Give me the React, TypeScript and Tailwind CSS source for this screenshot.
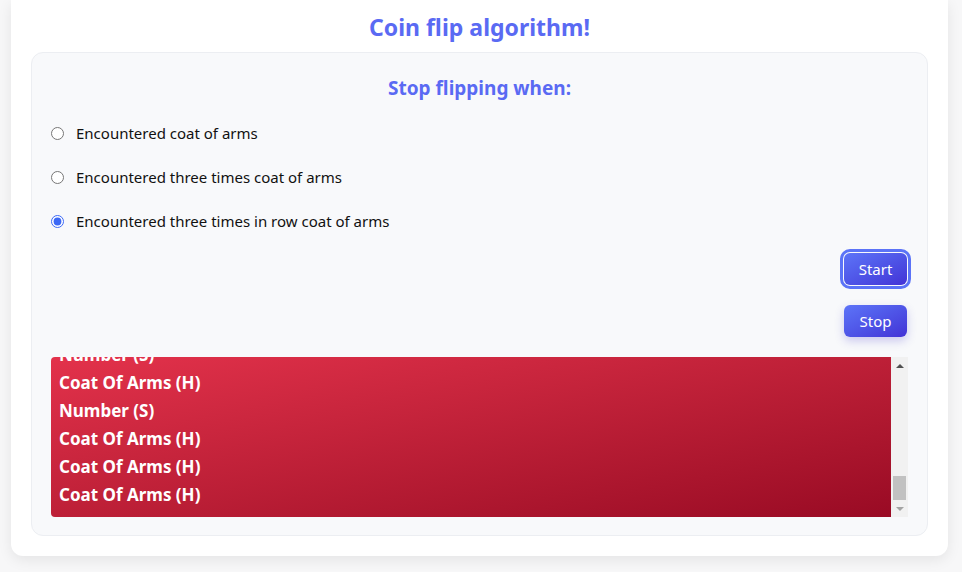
import { useEffect, useRef, useState } from "react";

const modes = [
  "Encountered coat of arms",
  "Encountered three times coat of arms",
  "Encountered three times in row coat of arms",
];

const flips = [
  "Number (S)",
  "Coat Of Arms (H)",
  "Number (S)",
  "Number (S)",
  "Coat Of Arms (H)",
  "Number (S)",
  "Coat Of Arms (H)",
  "Number (S)",
  "Coat Of Arms (H)",
  "Coat Of Arms (H)",
  "Coat Of Arms (H)",
];

export default function App() {
  const [mode, setMode] = useState(2);
  const listRef = useRef<HTMLDivElement>(null);

  useEffect(() => {
    const el = listRef.current;
    if (el) el.scrollTop = el.scrollHeight;
  }, []);

  return (
    <div
      className="min-h-[572px] bg-[#f7f7f8]"
      style={{ fontFamily: '"Noto Sans", "Segoe UI", sans-serif' }}
    >
      <div className="ml-[11px] w-[937px] rounded-b-[12px] bg-white px-[20px] pt-[10px] pb-[20px] shadow-[0_4px_14px_rgba(0,0,0,0.08)]">
        <h1 className="text-center text-[23px] font-bold leading-[34px] text-[#5a6af3]">
          Coin flip algorithm!
        </h1>

        {/* Settings panel */}
        <div className="mt-[8px] rounded-[12px] border border-[#eceef2] bg-[#f8f9fb] px-[19px] pt-[20px] pb-[18px]">
          <h2 className="text-center text-[19px] font-bold leading-[30px] text-[#5a6af3]">
            Stop flipping when:
          </h2>

          <div className="mt-[8px] flex flex-col">
            {modes.map((m, i) => (
              <label key={m} className="flex h-[44px] cursor-pointer items-center gap-[12px] text-[15px] text-[#111]">
                <input
                  type="radio"
                  name="mode"
                  checked={mode === i}
                  onChange={() => setMode(i)}
                  className="m-0 size-[13px] accent-[#3b68f5]"
                />
                {m}
              </label>
            ))}
          </div>

          <div className="mt-[10px] flex flex-col items-end gap-[20px] pr-[1px]">
            <button className="h-[32px] w-[63px] rounded-[6px] bg-gradient-to-br from-[#5d74f8] to-[#4331d6] text-[15px] text-white outline-[3px] outline-offset-[1px] outline-[#5b73f7] outline-solid">
              Start
            </button>
            <button className="h-[32px] w-[63px] rounded-[6px] bg-gradient-to-br from-[#5d74f8] to-[#4331d6] text-[15px] text-white shadow-[0_4px_10px_rgba(67,56,202,0.25)]">
              Stop
            </button>
          </div>

          {/* Flip history */}
          <div className="mt-[20px] flex h-[160px]">
            <div
              ref={listRef}
              className="flex-1 overflow-y-auto rounded-l-[4px] bg-gradient-to-br from-[#e3324b] to-[#990a24] px-[8px] pb-[8px] [scrollbar-width:none]"
            >
              {flips.map((f, i) => (
                <div key={i} className="text-[17px] font-bold leading-[28px] text-white">
                  {f}
                </div>
              ))}
            </div>
            <div className="flex w-[17px] flex-col items-center bg-[#f1f1f1]">
              <div className="flex h-[17px] items-center justify-center">
                <div className="h-0 w-0 border-x-[4px] border-b-[4px] border-x-transparent border-b-[#505050]" />
              </div>
              <div className="flex w-full flex-1 flex-col justify-end px-[2px]">
                <div className="h-[24px] w-full bg-[#c1c1c1]" />
              </div>
              <div className="flex h-[17px] items-center justify-center">
                <div className="h-0 w-0 border-x-[4px] border-t-[4px] border-x-transparent border-t-[#a3a3a3]" />
              </div>
            </div>
          </div>
        </div>
      </div>
    </div>
  );
}
